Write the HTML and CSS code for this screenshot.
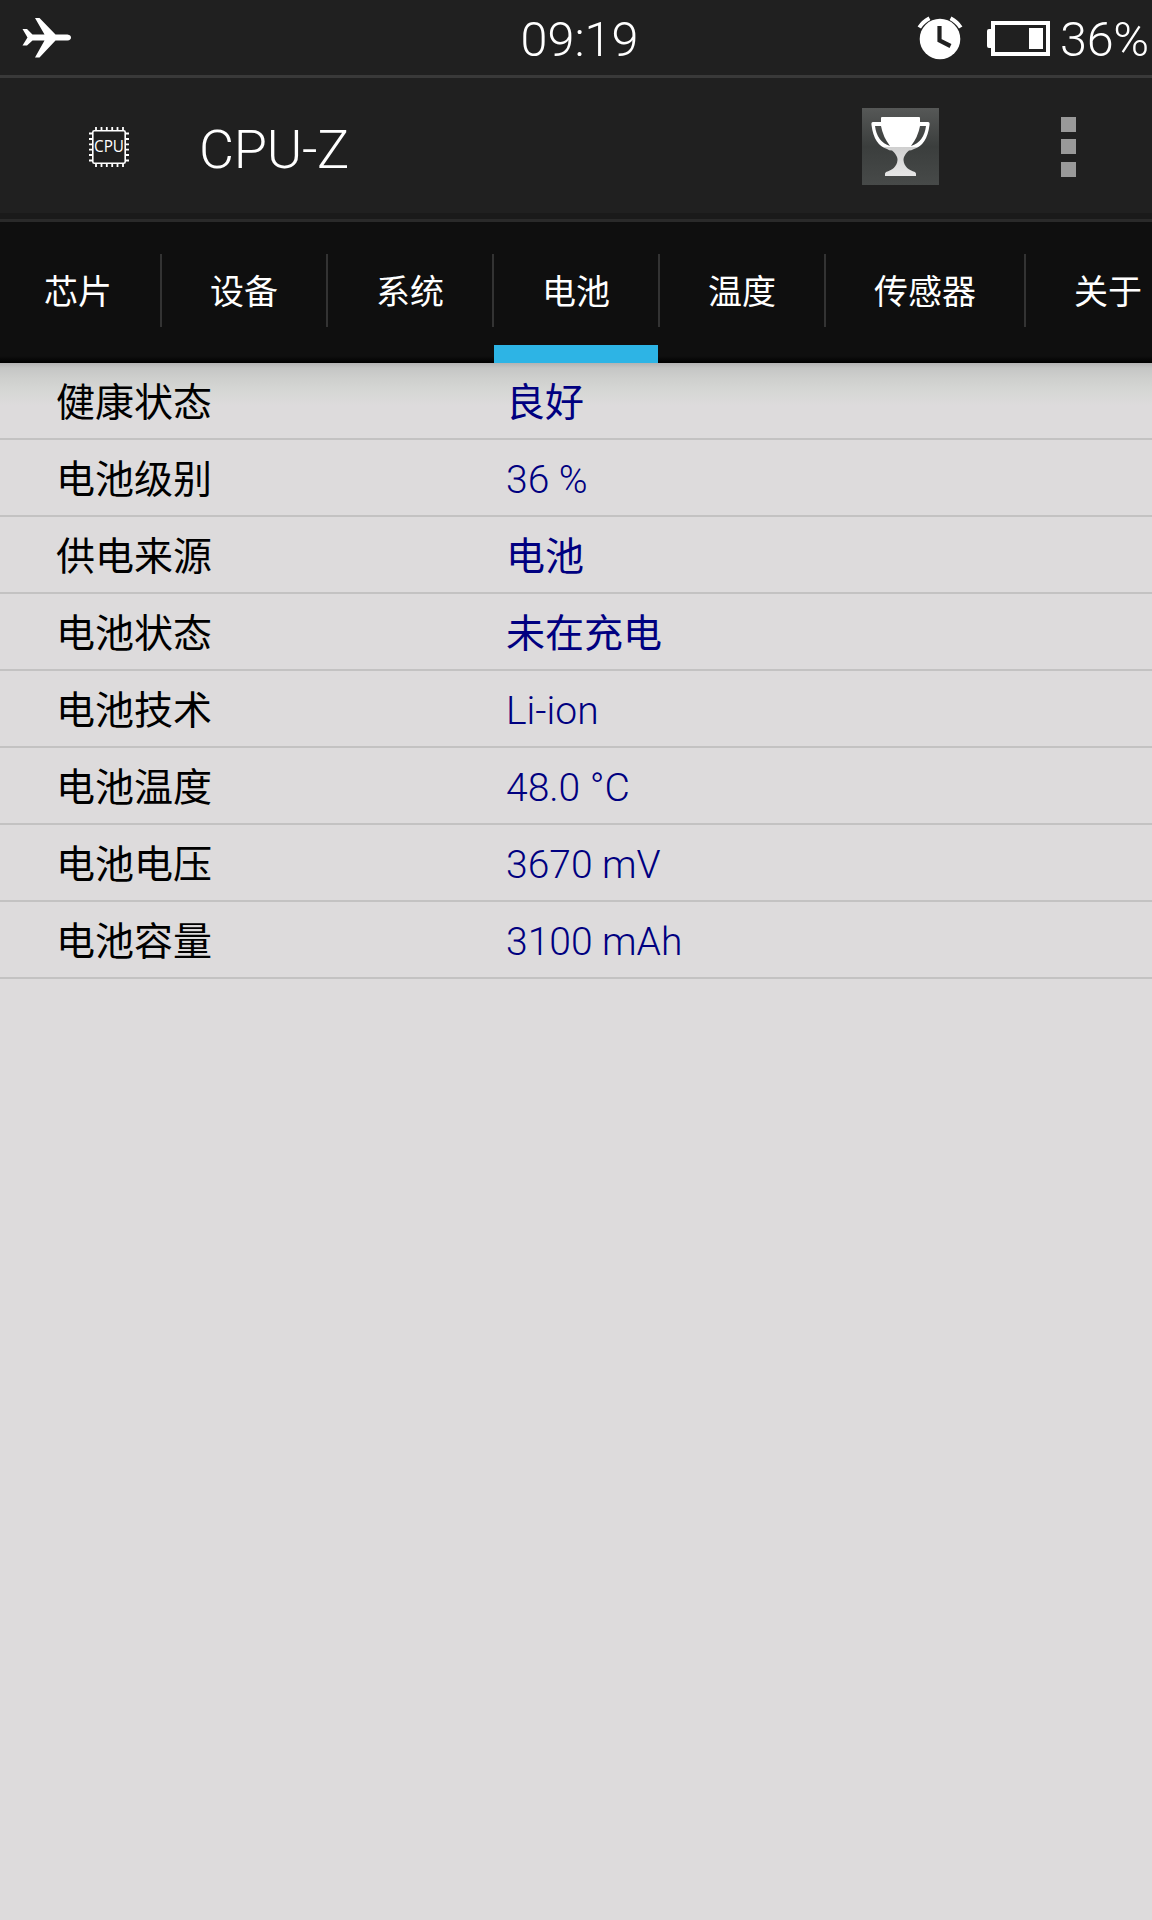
FILE: index.html
```html
<!DOCTYPE html>
<html lang="zh-CN">
<head>
<meta charset="utf-8">
<title>CPU-Z</title>
<link rel="stylesheet" href="styles.css">
</head>
<body>
<header class="status">
  <svg class="plane" width="50" height="42" viewBox="0 0 50 42">
    <path fill="#fff" d="M2 8H6.500L12 13.500H24L14.500-3H19L35 13.500H47Q50.500 14 50.500 16.500T47 19.500H35L19 36.500H14.500L24 19.500H12L6.500 24.500H2L7 16.500Z" transform="translate(-1.500 4)"/>
  </svg>
  <span class="clock">09:19</span>
  <div class="indicators">
    <svg width="46" height="44" viewBox="0 0 46 44">
      <circle cx="23" cy="23" r="20.300" fill="#fff"/>
      <path d="M2.300 11.500Q6 5.500 12.500 2.200M33.500 2.200Q40 5.500 43.700 11.500" fill="none" stroke="#fff" stroke-width="4"/>
      <path d="M22.500 10V24.500L33.500 30" fill="none" stroke="#202020" stroke-width="4.200"/>
    </svg>
    <svg width="63" height="35" viewBox="0 0 63 35">
      <path fill="#fff" d="M4 0H63V35H4V27H2Q0 27 0 25V10Q0 8 2 8H4ZM8 4V31H59V4Z" fill-rule="evenodd"/>
      <rect x="42" y="7" width="14" height="21" fill="#fff"/>
    </svg>
    <span class="percent">36%</span>
  </div>
</header>
<div class="appbar">
  <svg class="chip" width="40" height="40" viewBox="0 0 40 40">
    <g fill="none" stroke="#fff">
      <rect x="3.800" y="3.800" width="32.400" height="32.400" rx="1.500" stroke-width="1.600"/>
      <path stroke-width="1.800" d="M7 0V3M12.500 0V3M17.800 0V3M23.200 0V3M28.500 0V3M34 0V3M7 37V40M12.500 37V40M17.800 37V40M23.200 37V40M28.500 37V40M34 37V40M0 6.500H3M0 12H3M0 17.300H3M0 22.700H3M0 28H3M0 33.500H3M37 6.500H40M37 12H40M37 17.300H40M37 22.700H40M37 28H40M37 33.500H40"/>
    </g>
    <text class="chip-label" x="20" y="24.800" text-anchor="middle" textLength="30" lengthAdjust="spacingAndGlyphs">CPU</text>
  </svg>
  <h1 class="title">CPU-Z</h1>
  <svg class="trophy" width="77" height="77" viewBox="0 0 77 77">
    <defs>
      <linearGradient id="tile" x2="0" y2="1"><stop stop-color="#565857"/><stop offset=".5" stop-color="#3b3e3d"/><stop offset="1" stop-color="#474a49"/></linearGradient>
      <linearGradient id="cup" x2="0" y2="1"><stop offset=".51" stop-color="#fff"/><stop offset=".51" stop-color="#cfcfcf"/><stop offset="1" stop-color="#e6e6e6"/></linearGradient>
    </defs>
    <rect width="77" height="77" fill="url(#tile)"/>
    <path fill="url(#cup)" fill-rule="evenodd" d="M20 9H57Q58 9 58 10V14H66Q68 14 67.500 17Q65 37 52 41Q49 42.500 47 42.500C42 47 41.500 50 41.500 52C42 59 47 62 53 64Q54.500 65 54 68H23Q22.500 65 24 64C30 62 35 59 35.500 52C35.500 50 35 47 30 42.500Q27 42.500 25 41Q12 37 9.500 17Q9 14 11 14H19V10Q19 9 20 9ZM13 18Q15 34 28 38Q21 29 19 18ZM64 18H58Q56 29 49 38Q62 34 64 18Z"/>
  </svg>
  <div class="menu"><i></i><i></i><i></i></div>
</div>
<nav class="tabs">
  <span class="tab">芯片</span><span class="tab">设备</span><span class="tab">系统</span><span class="tab active">电池</span><span class="tab">温度</span><span class="tab">传感器</span><span class="tab">关于</span>
</nav>
<main class="rows">
  <div class="row"><span>健康状态</span><b class="han">良好</b></div>
  <div class="row"><span>电池级别</span><b>36 %</b></div>
  <div class="row"><span>供电来源</span><b class="han">电池</b></div>
  <div class="row"><span>电池状态</span><b class="han">未在充电</b></div>
  <div class="row"><span>电池技术</span><b>Li-ion</b></div>
  <div class="row"><span>电池温度</span><b>48.0 °C</b></div>
  <div class="row"><span>电池电压</span><b>3670 mV</b></div>
  <div class="row"><span>电池容量</span><b>3100 mAh</b></div>
</main>
</body>
</html>
```
FILE: styles.css
```css
* { box-sizing: border-box; }
body {
  margin: 0;
  width: 1152px;
  height: 1920px;
  overflow: hidden;
  background: #dddbdc;
  font-family: Roboto, "Noto Sans CJK SC", sans-serif;
  font-weight: 300;
  white-space: nowrap;
}
svg { display: block; flex: none; }
.status {
  display: grid;
  grid-template-columns: 1fr auto 1fr;
  align-items: center;
  height: 78px;
  padding: 0 3px 0 22px;
  border-bottom: 3px solid #393939;
  background: #202020;
  color: #fff;
  font-size: 48.5px;
  line-height: 75px;
}
.plane { margin-bottom: 2px; }
.clock { padding: 2px 0 0; margin-left: -12px; }
.indicators { display: flex; align-items: center; justify-content: flex-end; }
.indicators svg { margin-bottom: 1px; }
.indicators svg + svg { margin-left: 24px; }
.percent { margin-left: 10px; padding-top: 2px; letter-spacing: -0.2px; }
.appbar {
  display: flex;
  align-items: center;
  height: 144px;
  padding: 2px 76px 6px 89px;
  border-bottom: 3px solid #2a2a2a;
  background: linear-gradient(#202020 135px, #1a1a1a 135px);
  color: #fff;
}
.chip-label { font: 400 16px "Open Sans", sans-serif; fill: #fff; }
.title { margin: 6px 0 0 70px; font-size: 54px; font-weight: 300; line-height: 64px; letter-spacing: -0.3px; }
.trophy { margin-left: auto; }
.menu { display: grid; gap: 7.500px; margin-left: 122px; }
.menu i { width: 15px; height: 15px; background: #999; }
.tabs {
  display: flex;
  height: 141px;
  margin-left: -4px;
  background: linear-gradient(#0f0f0f 134px, #000);
  color: #fff;
  font-size: 34px;
  font-weight: 400;
  line-height: 141px;
}
.tab {
  flex: none;
  padding: 0 48px;
  border-right: 2px solid;
  border-image: linear-gradient(transparent 33px, #333 33px, #333 105px, transparent 105px) 1;
}
.active { background: linear-gradient(#2db4e5, #2db4e5) 0 100% / 164px 18px no-repeat padding-box; }
.rows { background: linear-gradient(#b3b3b3, #c5c6c5 5px, #cecfcd 15px, #d6d7d5 28px, #dddbdc 42px); }
.row {
  display: grid;
  grid-template-columns: 450px 1fr;
  height: 77px;
  padding-left: 56px;
  border-bottom: 2px solid #c3c2c2;
  color: #000;
  font-size: 39px;
  line-height: 81px;
}
.row span { font-weight: 400; }
.row b { color: #000080; font-weight: 300; }
.row .han { font-weight: 400; }
```
